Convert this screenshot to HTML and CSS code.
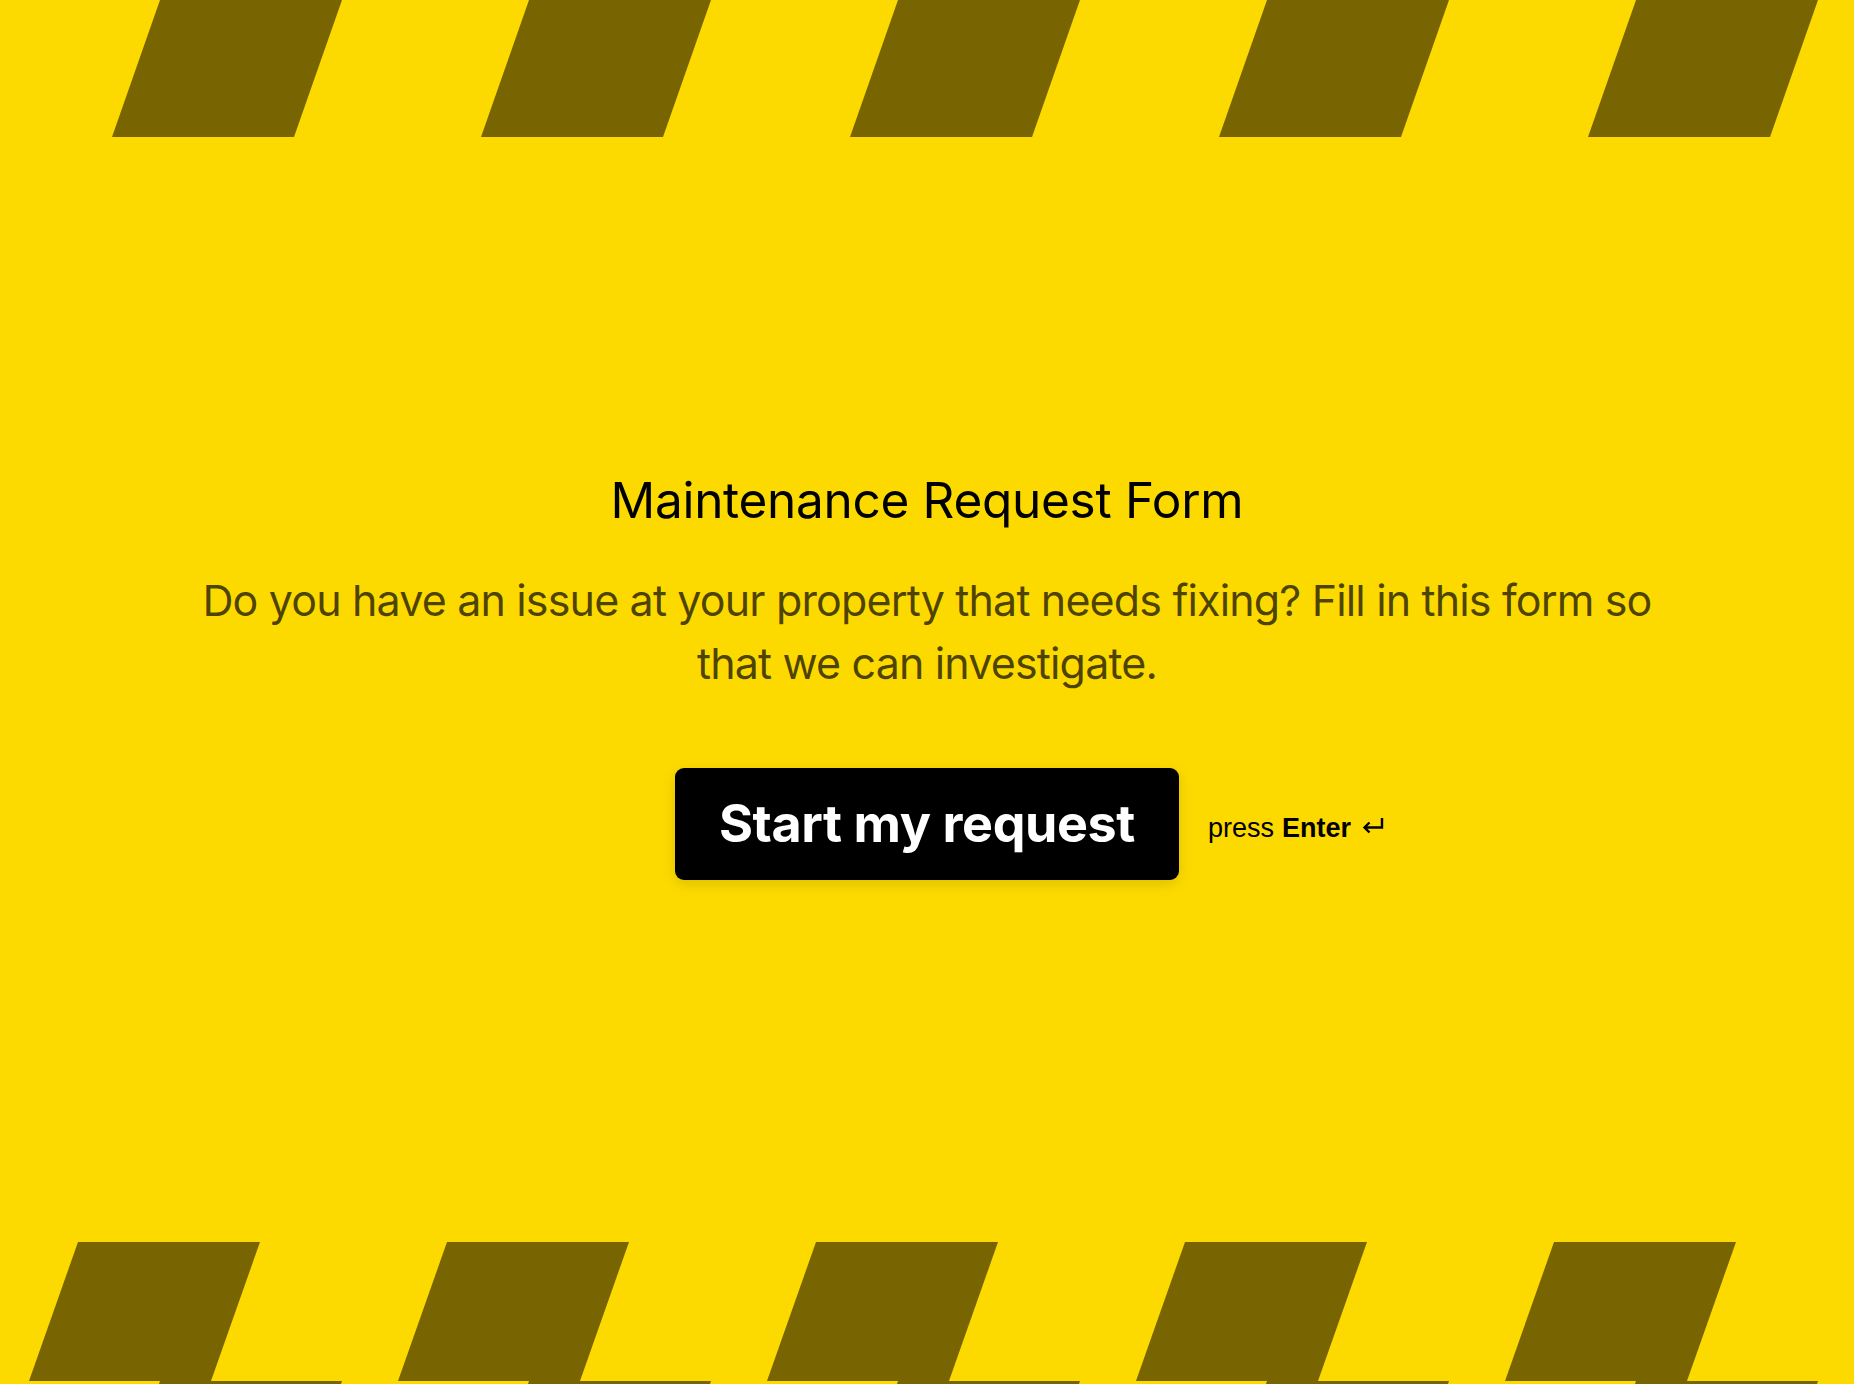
FILE: index.html
```html
<!DOCTYPE html>
<html lang="en">
<head>
<meta charset="utf-8">
<title>Maintenance Request Form</title>
<link rel="stylesheet" href="styles.css">
</head>
<body>
<div class="page">
  <svg class="band band-top" width="1854" height="137" viewBox="0 0 1854 137" aria-hidden="true">
    <g class="stripe">
      <polygon points="160,0 342,0 294,137 112,137"/>
      <polygon points="529,0 711,0 663,137 481,137"/>
      <polygon points="898,0 1080,0 1032,137 850,137"/>
      <polygon points="1267,0 1449,0 1401,137 1219,137"/>
      <polygon points="1636,0 1818,0 1770,137 1588,137"/>
    </g>
  </svg>

  <main class="welcome">
    <h1 class="title">Maintenance Request Form</h1>
    <p class="desc">Do you have an issue at your property that needs fixing? Fill in this form so that we can investigate.</p>
    <div class="actions">
      <button class="start-btn" type="button">Start my request</button>
      <span class="hint">press <b>Enter</b>
        <svg class="enter-icon" width="24" height="19" viewBox="0 0 24 19" aria-hidden="true">
          <path d="M21 2 V11.5 H4" fill="none" stroke="#000" stroke-width="2.4"/>
          <path d="M8.5 6.5 L3.5 11.5 L8.5 16.5" fill="none" stroke="#000" stroke-width="2.4"/>
        </svg>
      </span>
    </div>
  </main>

  <svg class="band band-bottom" width="1854" height="142" viewBox="0 0 1854 142" aria-hidden="true">
    <g class="stripe">
      <polygon points="78,0 260,0 211,139 29,139"/>
      <polygon points="447,0 629,0 580,139 398,139"/>
      <polygon points="816,0 998,0 949,139 767,139"/>
      <polygon points="1185,0 1367,0 1318,139 1136,139"/>
      <polygon points="1554,0 1736,0 1687,139 1505,139"/>
      <polygon points="160,139 342,139 341,142 159,142"/>
      <polygon points="529,139 711,139 710,142 528,142"/>
      <polygon points="898,139 1080,139 1079,142 897,142"/>
      <polygon points="1267,139 1449,139 1448,142 1266,142"/>
      <polygon points="1636,139 1818,139 1817,142 1635,142"/>
    </g>
  </svg>
</div>
</body>
</html>
```

FILE: styles.css
```css
* { box-sizing: border-box; }

html, body {
  margin: 0;
  padding: 0;
  background: #fcda00;
}

.page {
  width: 1854px;
  height: 1384px;
  display: flex;
  flex-direction: column;
  overflow: hidden;
  background: #fcda00;
  font-family: Inter, "Noto Sans", "Liberation Sans", sans-serif;
}

.band {
  display: block;
  flex: none;
}

.stripe polygon {
  fill: #786400;
}

.welcome {
  flex: 1;
  display: flex;
  flex-direction: column;
  align-items: center;
  padding-top: 332px;
}

.title {
  margin: 0;
  font-weight: 400;
  font-size: 49.5px;
  line-height: 62px;
  color: #000;
  letter-spacing: -0.3px;
}

.desc {
  margin: 38px 0 0;
  max-width: 1500px;
  text-align: center;
  font-size: 43px;
  line-height: 63px;
  color: rgba(0, 0, 0, 0.7);
  letter-spacing: -0.85px;
}

.actions {
  margin-top: 73px;
  display: flex;
  align-items: center;
  gap: 29px;
  margin-left: 206px;
}

.start-btn {
  width: 504px;
  height: 112px;
  border: none;
  border-radius: 9px;
  background: #000;
  color: #fff;
  font-family: Inter, "Noto Sans", "Liberation Sans", sans-serif;
  font-weight: 700;
  font-size: 52px;
  letter-spacing: -0.4px;
  box-shadow: 0 4px 14px rgba(0, 0, 0, 0.12);
  padding: 0 0 2px;
  cursor: pointer;
}

.hint {
  display: flex;
  align-items: center;
  gap: 7px;
  font-family: "Liberation Sans", Arial, sans-serif;
  font-size: 27px;
  color: #000;
  padding-top: 9px;
}

.hint b {
  font-weight: 700;
  margin-left: 1px;
}

.enter-icon {
  display: block;
  margin-left: 3px;
  margin-top: -7px;
}
```
